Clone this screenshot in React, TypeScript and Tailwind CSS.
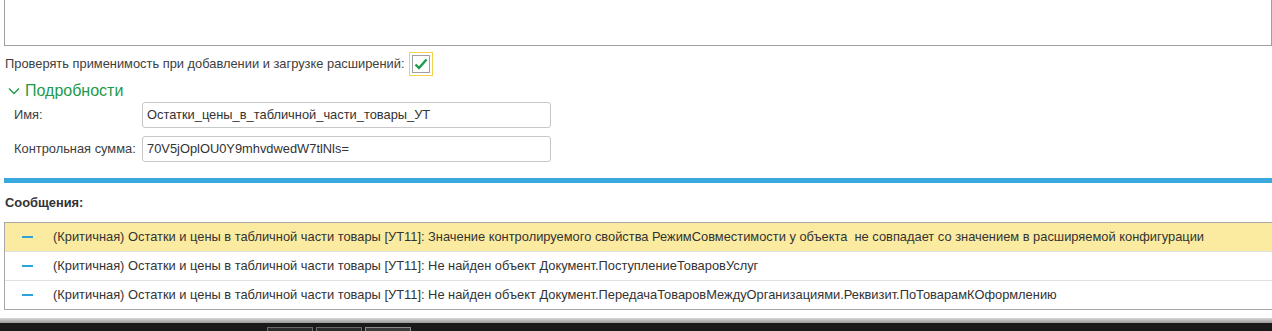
import React from "react";

const rows = [
  { text: "(Критичная) Остатки и цены в табличной части товары [УТ11]: Значение контролируемого свойства РежимСовместимости у объекта  не совпадает со значением в расширяемой конфигурации", hl: true },
  { text: "(Критичная) Остатки и цены в табличной части товары [УТ11]: Не найден объект Документ.ПоступлениеТоваровУслуг", hl: false },
  { text: "(Критичная) Остатки и цены в табличной части товары [УТ11]: Не найден объект Документ.ПередачаТоваровМеждуОрганизациями.Реквизит.ПоТоварамКОформлению", hl: false },
];

export default function App() {
  return (
    <div className="w-[1272px] h-[331px] bg-white overflow-hidden flex flex-col text-[12.86px] text-[#404040] whitespace-pre" style={{ fontFamily: '"Liberation Sans", Arial, sans-serif' }}>
      <div className="ml-[4px] h-[46px] shrink-0 border-x border-b border-[#a0a0a0]" />
      <div className="flex shrink-0 items-center h-[24px] mt-[6px] pl-[5px] gap-[4px]">
        <span>Проверять применимость при добавлении и загрузке расширений:</span>
        <div className="w-[24px] h-[24px] border border-[#f2d24b] flex items-center justify-center">
          <div className="w-[18px] h-[18px] border border-[#a0a0a0] bg-white flex items-center justify-center">
            <svg width="14" height="12" viewBox="0 0 14 12"><path d="M1.5 6.5 L5 10 L12.5 1.5" fill="none" stroke="#1d9a4a" strokeWidth="2.4" /></svg>
          </div>
        </div>
      </div>
      <div className="flex shrink-0 items-center h-[20px] mt-[5px] pl-[8px] gap-[5px] text-[#1d9a4a] text-[16px]">
        <svg width="12" height="8" viewBox="0 0 12 8"><path d="M1 1.5 L6 6.5 L11 1.5" fill="none" stroke="#1d9a4a" strokeWidth="1.4" /></svg>
        <span>Подробности</span>
      </div>
      <div className="flex shrink-0 items-center h-[26px] mt-[1px]">
        <span className="w-[142px] pl-[14px]">Имя:</span>
        <div className="w-[409px] h-[26px] border border-[#c8c8c8] rounded-[3px] flex items-center pl-[4px] text-[#333]">Остатки_цены_в_табличной_части_товары_УТ</div>
      </div>
      <div className="flex shrink-0 items-center h-[26px] mt-[8px]">
        <span className="w-[142px] pl-[14px]">Контрольная сумма:</span>
        <div className="w-[409px] h-[26px] border border-[#c8c8c8] rounded-[3px] flex items-center pl-[4px] text-[#333]">70V5jOplOU0Y9mhvdwedW7tlNls=</div>
      </div>
      <div className="ml-[4px] mt-[16px] h-[5px] bg-[#3aa8dc] shrink-0" />
      <div className="h-[39px] shrink-0 flex items-center pl-[5px] font-bold text-[#333]">Сообщения:</div>
      <div className="ml-[4px] shrink-0 border border-r-0 border-[#a8a8a8] flex flex-col">
        {rows.map((r, i) => (
          <div key={i} className={`flex items-center ${i > 0 ? "h-[29px] border-t border-[#e0e0e0]" : "h-[28px]"} ${r.hl ? "bg-[#fbeba1]" : "bg-white"}`}>
            <div className="w-[48px] flex justify-center pr-[4px]">
              <div className="w-[11px] h-[2px] bg-[#2ea3d9]" />
            </div>
            <span className="text-[#333]">{r.text}</span>
          </div>
        ))}
      </div>
      <div className="h-[8px] shrink-0" />
      <div className="h-[5px] shrink-0 bg-gradient-to-b from-[#d8d8d8] to-[#9a9a9a]" />
      <div className="flex-1 min-h-[8px] bg-[#1a1a1a] flex items-start gap-[3px] pl-[267px] pt-[4px]">
        <div className="w-[46px] h-[14px] shrink-0 border border-[#6a6a6a] bg-[#2c2c2c]" />
        <div className="w-[46px] h-[14px] shrink-0 border border-[#6a6a6a] bg-[#2c2c2c]" />
        <div className="w-[46px] h-[14px] shrink-0 border border-[#8a8a8a] bg-[#3a3a3a]" />
      </div>
    </div>
  );
}
